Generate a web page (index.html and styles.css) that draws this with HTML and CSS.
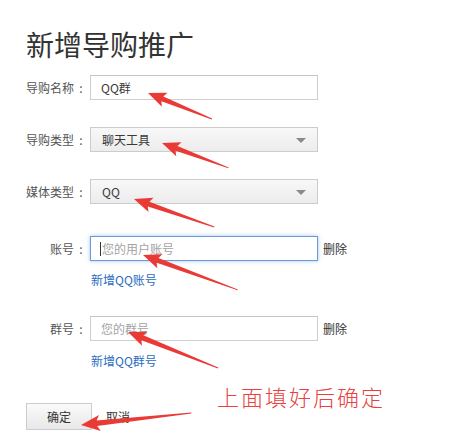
FILE: index.html
```html
<!DOCTYPE html>
<html lang="zh-CN">
<head>
<meta charset="utf-8">
<title>新增导购推广</title>
<link rel="stylesheet" href="styles.css">
</head>
<body>
<div class="page">
  <h1 class="title">新增导购推广</h1>

  <div class="row r1">
    <span class="lbl">导购名称<span class="colon">:</span></span>
    <div class="field input"><span class="val">QQ群</span></div>
  </div>

  <div class="row r2">
    <span class="lbl">导购类型<span class="colon">:</span></span>
    <div class="field select"><span class="val">聊天工具</span><span class="tri"></span></div>
  </div>

  <div class="row r3">
    <span class="lbl">媒体类型<span class="colon">:</span></span>
    <div class="field select"><span class="val">QQ</span><span class="tri"></span></div>
  </div>

  <div class="row r4">
    <span class="lbl">账号<span class="colon">:</span></span>
    <div class="field input focus"><span class="caret"></span><span class="ph">您的用户账号</span></div>
    <a class="del">删除</a>
  </div>
  <div class="add a1"><a class="link">新增QQ账号</a></div>

  <div class="row r5">
    <span class="lbl">群号<span class="colon">:</span></span>
    <div class="field input"><span class="ph">您的群号</span></div>
    <a class="del">删除</a>
  </div>
  <div class="add a2"><a class="link">新增QQ群号</a></div>

  <div class="actions">
    <button class="btn">确定</button>
    <a class="cancel">取消</a>
  </div>

  <div class="note">上面填好后确定</div>

  <svg class="marks" width="469" height="448" viewBox="0 0 469 448">
    <g fill="#ea3a36">
      <g transform="translate(148,93) rotate(22.1)"><polygon points="0,0 18,-7.5 15.5,-2.6 69,-0.5 69,0.5 15.5,2.6 18,7.5"/></g>
      <g transform="translate(162,143) rotate(20.5)"><polygon points="0,0 18,-7.5 15.5,-2.6 71,-0.5 71,0.5 15.5,2.6 18,7.5"/></g>
      <g transform="translate(134,199) rotate(19.3)"><polygon points="0,0 18,-7.5 15.5,-2.6 85,-0.5 85,0.5 15.5,2.6 18,7.5"/></g>
      <g transform="translate(143,255) rotate(20.2)"><polygon points="0,0 18,-7.5 15.5,-2.6 101,-0.5 101,0.5 15.5,2.6 18,7.5"/></g>
      <g transform="translate(128,332) rotate(21.8)"><polygon points="0,0 18,-7.5 15.5,-2.6 97,-0.5 97,0.5 15.5,2.6 18,7.5"/></g>
      <g transform="translate(81,425) rotate(-6.2)"><polygon points="0,0 19,-8 16,-2.8 111,-0.5 111,0.5 16,2.8 19,8"/></g>
    </g>
  </svg>
</div>
</body>
</html>
```

FILE: styles.css
```css
html, body {
  margin: 0;
  padding: 0;
  background: #ffffff;
}

.page {
  position: relative;
  width: 469px;
  height: 448px;
  box-sizing: border-box;
  padding: 30px 0 0 26px;
  font-family: "Noto Sans CJK SC", "Noto Sans", sans-serif;
  font-size: 12px;
  color: #333;
  overflow: hidden;
}

.title {
  margin: 0;
  font-size: 28px;
  line-height: 28px;
  font-weight: normal;
  color: #333;
}

.row {
  display: flex;
  align-items: center;
  height: 25px;
}

.r1 { margin-top: 17px; }
.r2 { margin-top: 27px; }
.r3 { margin-top: 27px; }
.r4 { margin-top: 32px; }
.r5 { margin-top: 27px; }

.lbl {
  width: 60px;
  margin-right: 4px;
  text-align: right;
  color: #555;
  font-size: 12px;
  white-space: nowrap;
}

.colon {
  display: inline-block;
  width: 12px;
  padding-left: 2px;
  box-sizing: border-box;
  text-align: center;
}

.r1 .lbl, .r2 .lbl, .r3 .lbl { text-align: left; }

.field {
  box-sizing: border-box;
  width: 228px;
  height: 25px;
  border: 1px solid #cfcfcf;
  display: flex;
  align-items: center;
  background: #fff;
  position: relative;
}

.input {
  padding-left: 10px;
  border-top-color: #c4c4c4;
}

.select {
  padding-left: 11px;
  background: linear-gradient(#f8f8f8, #ececec);
  border-color: #cccccc;
}

.val {
  font-size: 12px;
  color: #3a3a3a;
}

.tri {
  position: absolute;
  right: 11px;
  top: 10px;
  width: 0;
  height: 0;
  border-left: 5px solid transparent;
  border-right: 5px solid transparent;
  border-top: 5px solid #8a8a8a;
}

.focus {
  border-color: #6a9ad6;
  box-shadow: 0 0 4px rgba(90, 150, 225, 0.55);
  padding-left: 9px;
}

.caret {
  width: 1px;
  height: 14px;
  background: #333;
  margin-right: 1px;
}

.ph {
  color: #a3a3a3;
  font-size: 12px;
}

.del {
  margin-left: 5px;
  color: #333;
  font-size: 12px;
}

.add {
  padding-left: 65px;
  line-height: 18px;
}

.a1 { margin-top: 10px; }
.a2 { margin-top: 11px; }

.link {
  color: #2a6cbf;
  font-size: 12px;
}

.actions {
  display: flex;
  align-items: center;
  margin-top: 33px;
}

.btn {
  box-sizing: border-box;
  width: 66px;
  height: 27px;
  border: 1px solid #cccccc;
  background: linear-gradient(#fafafa, #e8e8e8);
  font-family: "Noto Sans CJK SC", sans-serif;
  font-size: 12px;
  color: #333;
  padding: 0;
  margin: 0;
}

.cancel {
  margin-left: 14px;
  color: #333;
  font-size: 12px;
}

.note {
  position: absolute;
  left: 217px;
  top: 381px;
  font-size: 22px;
  line-height: 30px;
  letter-spacing: 2px;
  color: #e8413e;
  font-family: "Noto Sans CJK SC", sans-serif;
  font-weight: 300;
}

.marks {
  position: absolute;
  left: 0;
  top: 0;
  pointer-events: none;
}
```
